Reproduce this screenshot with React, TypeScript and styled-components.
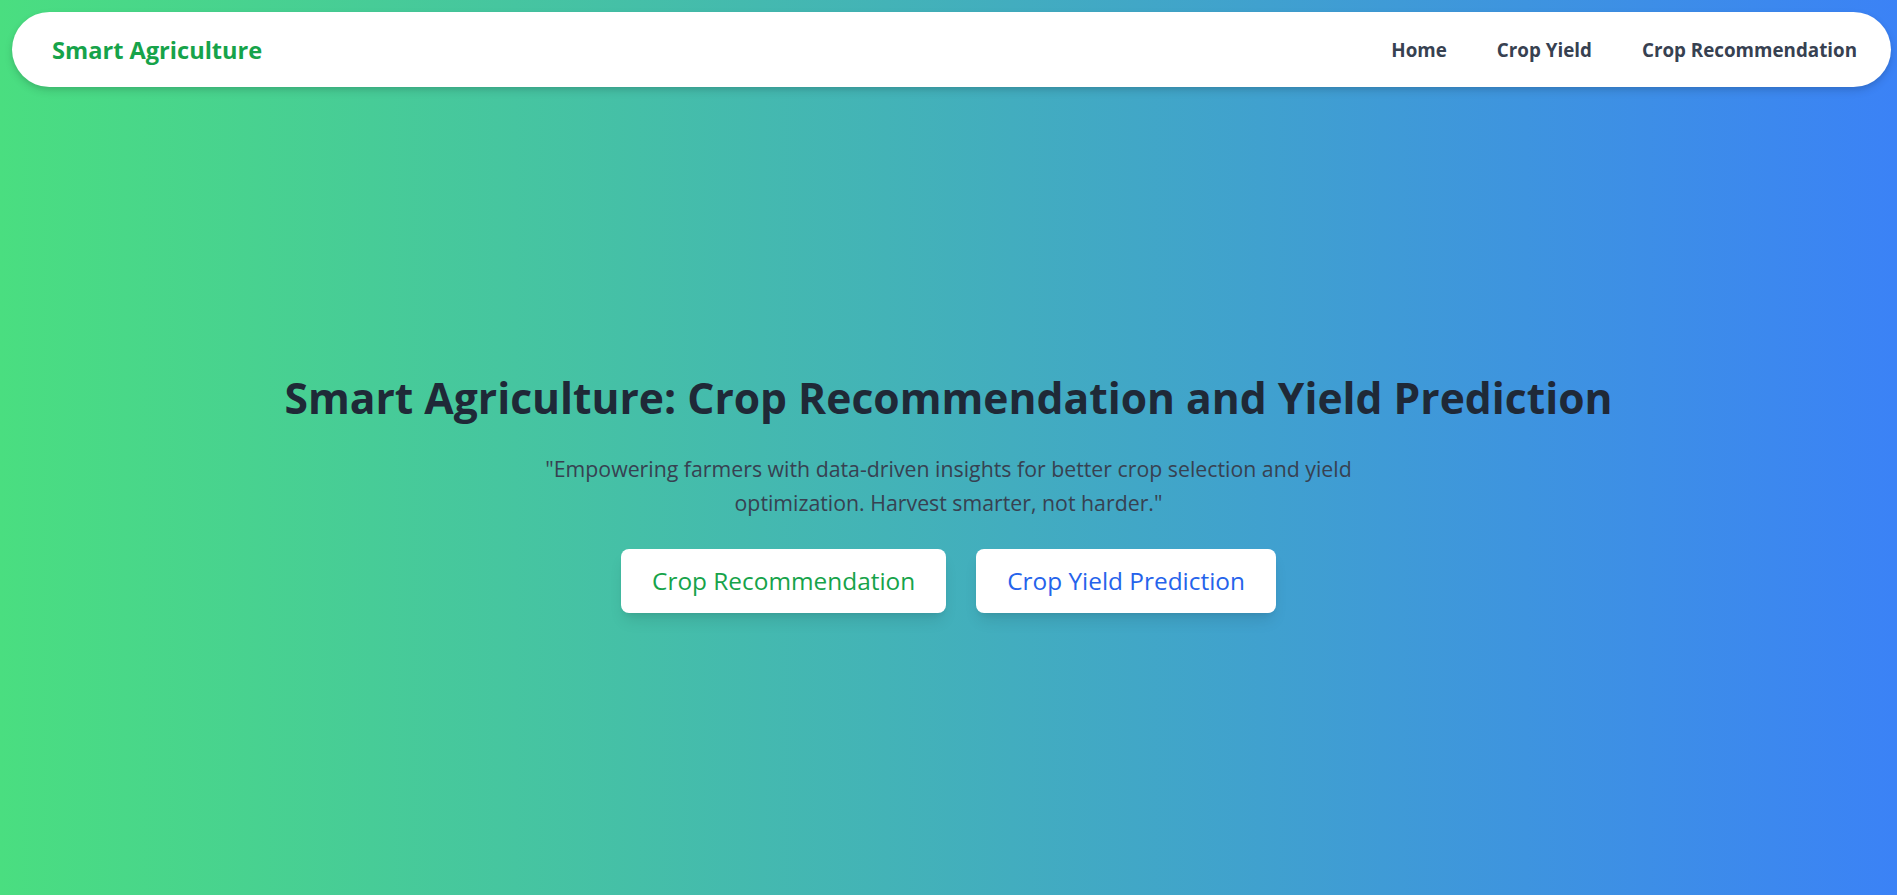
import React from "react";
import styled, { createGlobalStyle } from "styled-components";

const GlobalStyle = createGlobalStyle`
  * {
    box-sizing: border-box;
  }

  body {
    margin: 0;
    font-family: "Segoe UI", "Open Sans", "Noto Sans", sans-serif;
  }
`;

const Page = styled.div`
  min-height: 100vh;
  display: flex;
  flex-direction: column;
  background: linear-gradient(to right, #4ade80, #3b82f6);
`;

const NavBar = styled.nav`
  margin: 12px 6px 0 12px;
  height: 75px;
  padding: 0 34px 0 40px;
  display: flex;
  align-items: center;
  justify-content: space-between;
  background-color: #ffffff;
  border-radius: 9999px;
  box-shadow: 0 4px 8px rgba(0, 0, 0, 0.12), 0 2px 4px rgba(0, 0, 0, 0.06);
`;

const Logo = styled.a`
  color: #16a34a;
  font-size: 23.6px;
  font-weight: 700;
  text-decoration: none;
`;

const NavLinks = styled.div`
  display: flex;
  align-items: center;
  gap: 50px;
`;

const NavLink = styled.a`
  color: #374151;
  font-size: 18.8px;
  font-weight: 700;
  text-decoration: none;
`;

const Hero = styled.main`
  flex: 1;
  display: flex;
  flex-direction: column;
  align-items: center;
  justify-content: center;
  text-align: center;
  padding: 0 24px;
`;

const Title = styled.h1`
  margin: 0 0 27px;
  font-size: 42.6px;
  line-height: 56px;
  font-weight: 700;
  color: #1f2937;
`;

const Subtitle = styled.p`
  margin: 0 0 29px;
  max-width: 896px;
  font-size: 21.3px;
  line-height: 34px;
  color: #374151;
`;

const ButtonRow = styled.div`
  display: flex;
  gap: 30px;
`;

const HeroButton = styled.a<{ $tone: "green" | "blue" }>`
  display: inline-block;
  padding: 16px 31px;
  font-size: 24.4px;
  line-height: 32px;
  font-weight: 500;
  background-color: #ffffff;
  color: ${({ $tone }) => ($tone === "green" ? "#16a34a" : "#2563eb")};
  border-radius: 8px;
  text-decoration: none;
  box-shadow: 0 10px 15px -3px rgba(0, 0, 0, 0.1), 0 4px 6px -4px rgba(0, 0, 0, 0.1);
`;

export default function App() {
  return (
    <>
      <GlobalStyle />
      <Page>
        <NavBar>
          <Logo href="#">Smart Agriculture</Logo>
          <NavLinks>
            <NavLink href="#">Home</NavLink>
            <NavLink href="#">Crop Yield</NavLink>
            <NavLink href="#">Crop Recommendation</NavLink>
          </NavLinks>
        </NavBar>
        <Hero>
          <Title>Smart Agriculture: Crop Recommendation and Yield Prediction</Title>
          <Subtitle>
            "Empowering farmers with data-driven insights for better crop
            selection and yield optimization. Harvest smarter, not harder."
          </Subtitle>
          <ButtonRow>
            <HeroButton href="#" $tone="green">
              Crop Recommendation
            </HeroButton>
            <HeroButton href="#" $tone="blue">
              Crop Yield Prediction
            </HeroButton>
          </ButtonRow>
        </Hero>
      </Page>
    </>
  );
}
